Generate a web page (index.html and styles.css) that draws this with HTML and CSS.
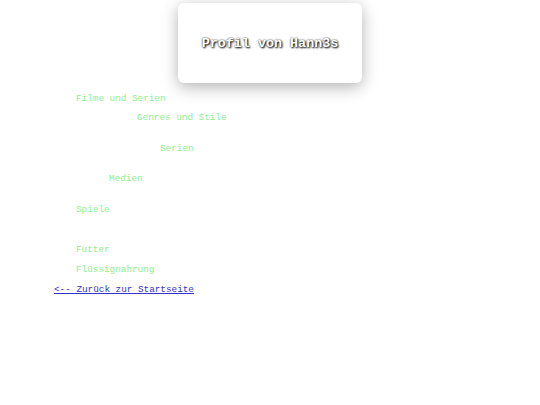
FILE: index.html
```html
<!DOCTYPE html>
<html lang="de">
<head>
<meta charset="utf-8">
<title>Profil von Hann3s</title>
<link rel="stylesheet" href="styles.css">
</head>
<body>
<header class="card">
  <h1 class="title">Profil von Hann3s</h1>
</header>
<nav class="list">
  <div class="row ind-1">Filme und Serien</div>
  <div class="row ind-3 up-1">Genres und Stile</div>
  <div class="row ind-4 gap-11">Serien</div>
  <div class="row ind-2 gap-10">Medien</div>
  <div class="row ind-1 gap-11">Spiele</div>
  <div class="row ind-1 gap-20">Futter</div>
  <div class="row ind-1">Flüssignahrung</div>
  <div class="row ind-0"><a class="back" href="#">&lt;-- Zurück zur Startseite</a></div>
</nav>
</body>
</html>
```

FILE: styles.css
```css
html, body {
  margin: 0;
  padding: 0;
  background: #ffffff;
}
body {
  font-family: "Liberation Mono", "Courier New", monospace;
  font-size: 9.33px;
}
.card {
  width: 184px;
  height: 80px;
  margin: 3px auto 0;
  background: #ffffff;
  border-radius: 6px;
  box-shadow: 0 4px 16px rgba(0, 0, 0, 0.3);
  display: flex;
  align-items: center;
  justify-content: center;
}
.title {
  margin: 0;
  font-size: 13.4px;
  font-weight: bold;
  color: #ffffff;
  text-shadow: 1px 1px 2px #000000, 0 0 2px #333333;
  letter-spacing: 0;
}
.list {
  margin-top: 6px;
}
.row {
  height: 20px;
  line-height: 20px;
  color: #8ef08e;
  white-space: nowrap;
}
.ind-0 { padding-left: 54px; }
.ind-1 { padding-left: 76px; }
.ind-2 { padding-left: 109px; }
.ind-3 { padding-left: 137px; }
.ind-4 { padding-left: 160px; }
.up-1 { margin-top: -1px; }
.gap-10 { margin-top: 10px; }
.gap-11 { margin-top: 11px; }
.gap-20 { margin-top: 20px; }
.back {
  color: #3333cc;
  text-decoration: underline;
}
```
